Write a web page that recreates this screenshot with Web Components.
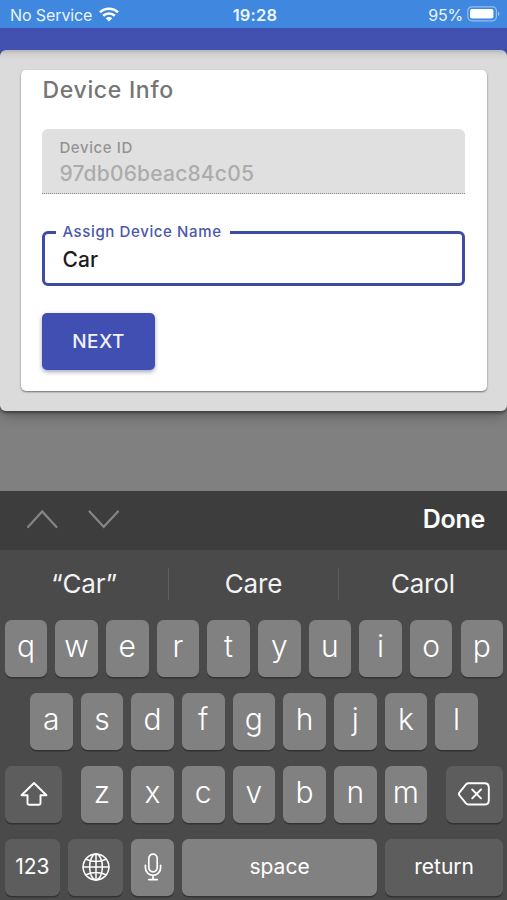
<!DOCTYPE html>
<html lang="en">
<head>
<meta charset="utf-8">
<title>Device Info</title>
<style>
    html, body {
        margin: 0;
        padding: 0;
    }

    body {
        width: 507px;
        height: 900px;
        overflow: hidden;
        background: #808080;
        font-family: Inter, "Liberation Sans", sans-serif;
    }
</style>
</head>
<body>
<device-screen></device-screen>

<script>
class BaseElement extends HTMLElement {

    constructor() {
        super();
        this.attachShadow({ mode: "open" });
    }

    connectedCallback() {
        this.shadowRoot.innerHTML = this.render();
    }
}

class StatusBar extends BaseElement {

    render() {
        return `
            <style>
                :host {
                    display: grid;
                    grid-template-columns: 1fr auto 1fr;
                    align-items: center;
                    box-sizing: border-box;
                    height: 28px;
                    padding: 1px 7px 0 10px;
                    background: #3f87df;
                    color: #eaf5ff;
                    font-size: 16px;
                    line-height: 20px;
                }

                div {
                    display: flex;
                    align-items: center;
                }

                .carrier {
                    letter-spacing: -0.1px;
                }

                .wifi {
                    margin: -1px 0 0 7px;
                }

                .time {
                    font-weight: 600;
                    font-size: 16.5px;
                    letter-spacing: 0.2px;
                }

                .power {
                    justify-content: flex-end;
                    letter-spacing: -0.2px;
                }

                .battery {
                    margin: -1px 0 0 4px;
                }
            </style>
            <div>
                <span class="carrier">No Service</span>
                <svg class="wifi" width="20" height="15" viewBox="0 0 20 15" fill="none" stroke="#fff" stroke-width="2.6">
                    <path d="M1 5.3a13 13 0 0 1 18 0"/>
                    <path d="M4.2 8.8a8.3 8.3 0 0 1 11.6 0"/>
                    <path d="M10 14.6 6.7 11.3a4.8 4.8 0 0 1 6.6 0z" fill="#fff" stroke="none"/>
                </svg>
            </div>
            <span class="time">19:28</span>
            <div class="power">
                <span>95%</span>
                <svg class="battery" width="33" height="16" viewBox="0 0 33 16">
                    <rect x="0.8" y="0.8" width="28.6" height="14" rx="4" fill="none" stroke="#93c0f0" stroke-width="1.2"/>
                    <rect x="3" y="3" width="23.4" height="9.6" rx="1.8" fill="#fff"/>
                    <path d="M31 5.5q1.4.6 1.4 2.3T31 10.2z" fill="#93c0f0"/>
                </svg>
            </div>
        `;
    }
}

class TextField extends BaseElement {

    render() {
        return `
            <style>
                :host {
                    display: block;
                    box-sizing: border-box;
                    width: 423px;
                    height: 65px;
                    padding: 10px 17px 0;
                    border-bottom: 1px dotted #8c8c8c;
                    border-radius: 6px 6px 0 0;
                    background: #e0e0e0;
                }

                .label {
                    color: #939393;
                    font-size: 15px;
                    font-weight: 500;
                    line-height: 18px;
                    letter-spacing: 0.6px;
                }

                .value {
                    margin-top: 4px;
                    color: #acacac;
                    font-size: 21px;
                    font-weight: 450;
                    line-height: 26px;
                    letter-spacing: 0.2px;
                }
            </style>
            <div class="label">${this.getAttribute("label")}</div>
            <div class="value"><slot></slot></div>
        `;
    }
}

class OutlinedField extends BaseElement {

    render() {
        return `
            <style>
                :host {
                    display: block;
                }

                fieldset {
                    box-sizing: border-box;
                    width: 423px;
                    height: 63px;
                    margin: 0;
                    padding: 0 17px;
                    border: 3px solid #3d4ba5;
                    border-radius: 6px;
                }

                legend {
                    margin-left: -6px;
                    padding: 0 8px 0 6px;
                    color: #4a57ab;
                    font-size: 15px;
                    font-weight: 500;
                    line-height: 18px;
                    letter-spacing: 0.62px;
                    white-space: nowrap;
                }

                .value {
                    margin-top: 6px;
                    color: #1c1c1c;
                    font-size: 21px;
                    font-weight: 500;
                    line-height: 26px;
                    letter-spacing: 0.2px;
                }
            </style>
            <fieldset>
                <legend>${this.getAttribute("label")}</legend>
                <div class="value"><slot></slot></div>
            </fieldset>
        `;
    }
}

class RaisedButton extends BaseElement {

    render() {
        return `
            <style>
                :host {
                    display: block;
                }

                button {
                    display: block;
                    width: 112.5px;
                    height: 57px;
                    padding: 0;
                    border: 0;
                    border-radius: 5px;
                    background: #404fb1;
                    box-shadow: 0 2px 4px rgba(30, 35, 90, 0.4);
                    color: #f0f3ff;
                    font: 500 19px/57px Inter, sans-serif;
                    letter-spacing: 0.5px;
                }
            </style>
            <button><slot></slot></button>
        `;
    }
}

class DeviceCard extends BaseElement {

    render() {
        return `
            <style>
                :host {
                    display: block;
                    box-sizing: border-box;
                    height: 321px;
                    padding: 6px 21px 0 21.4px;
                    border-radius: 5px;
                    background: #fff;
                    box-shadow: 0 1px 2px rgba(0, 0, 0, 0.5);
                }

                h2 {
                    margin: 0 0 25px;
                    color: #757575;
                    font-size: 23px;
                    font-weight: 500;
                    line-height: 28px;
                    letter-spacing: 0.7px;
                }

                outlined-field {
                    margin: 29px 0 27px;
                }
            </style>
            <h2>Device Info</h2>
            <text-field label="Device ID">97db06beac84c05</text-field>
            <outlined-field label="Assign Device Name">Car</outlined-field>
            <raised-button>NEXT</raised-button>
        `;
    }
}

class InputToolbar extends BaseElement {

    render() {
        return `
            <style>
                :host {
                    display: flex;
                    align-items: center;
                    justify-content: space-between;
                    box-sizing: border-box;
                    height: 59px;
                    padding: 0 22px 4px 26px;
                    background: #3d3d3d;
                    color: #fff;
                    font-size: 25px;
                    font-weight: 600;
                    letter-spacing: -0.3px;
                }

                svg {
                    fill: none;
                    stroke: #858585;
                    stroke-width: 2.2;
                    stroke-linecap: round;
                }
            </style>
            <svg width="94" height="22" viewBox="0 0 94 22">
                <path d="M2 19 16.2 3.5 30.5 19M63.5 3.5 77.7 18.8 92 3.5"/>
            </svg>
            <span>Done</span>
        `;
    }
}

class SuggestionBar extends BaseElement {

    render() {
        const words = this.getAttribute("words").split(",");
        return `
            <style>
                :host {
                    display: flex;
                    align-items: center;
                    box-sizing: border-box;
                    height: 70px;
                    padding-bottom: 2px;
                }

                span {
                    flex: 1;
                    color: #f2f2f2;
                    font-size: 26px;
                    line-height: 32px;
                    letter-spacing: -0.2px;
                    text-align: center;
                }

                span + span {
                    border-left: 1px solid #5e5e5e;
                }
            </style>
            ${words.map(word => `<span>${word}</span>`).join("")}
        `;
    }
}

class KeyCap extends BaseElement {

    render() {
        return `
            <style>
                :host {
                    display: flex;
                    align-items: center;
                    justify-content: center;
                    box-sizing: border-box;
                    flex: none;
                    width: 42.6px;
                    height: 56.5px;
                    padding-bottom: 4.5px;
                    border-radius: 6.5px;
                    background: #818181;
                    box-shadow: 0 1.5px 0 #333;
                    color: #fff;
                    font-size: 30px;
                    font-weight: 350;
                }

                :host([dark]) {
                    background: #5d5d5d;
                }

                :host([small]) {
                    padding-bottom: 2px;
                    font-size: 21px;
                    font-weight: 400;
                }

                :host([icon]) {
                    padding-bottom: 0;
                }
            </style>
            <slot></slot>
        `;
    }
}

class SoftKeyboard extends BaseElement {

    keys(letters) {
        return [...letters].map(letter => `<key-cap>${letter}</key-cap>`).join("");
    }

    render() {
        return `
            <style>
                :host {
                    display: block;
                    height: 350px;
                    background: #4a4a4a;
                }

                .row {
                    display: flex;
                    justify-content: center;
                    gap: 8.07px;
                    height: 56.5px;
                    margin-bottom: 16.5px;
                    padding-left: 0.8px;
                }

                .wide {
                    width: 56.7px;
                }

                .shift {
                    margin-right: 10.7px;
                }

                .delete {
                    margin-left: 10.7px;
                }

                .mode {
                    width: 55.3px;
                }

                .space {
                    width: 195px;
                }

                .return {
                    width: 118px;
                }

                svg {
                    fill: none;
                    stroke: #fff;
                    stroke-width: 1.9;
                    stroke-linejoin: round;
                    stroke-linecap: round;
                }
            </style>
            <suggestion-bar words="“Car”,Care,Carol"></suggestion-bar>
            <div class="row">${this.keys("qwertyuiop")}</div>
            <div class="row">${this.keys("asdfghjkl")}</div>
            <div class="row">
                <key-cap class="wide shift" dark icon>
                    <svg width="28" height="26" viewBox="0 0 28 26">
                        <path d="M14 2 1.5 14.2h6V22q0 1.8 1.8 1.8h9.4q1.8 0 1.8-1.8v-7.8h6z"/>
                    </svg>
                </key-cap>
                ${this.keys("zxcvbnm")}
                <key-cap class="wide delete" dark icon>
                    <svg width="32" height="24" viewBox="0 0 32 24">
                        <path d="M10.5 1.3h16Q30.8 1.3 30.8 5.6v12.6q0 4.3-4.3 4.3h-16q-1.5 0-2.5-1.1L1.6 13.5q-1.4-1.6 0-3.2L8 2.4q1-1.1 2.5-1.1z"/>
                        <path d="m14.2 7.5 8.8 8.8M23 7.5l-8.8 8.8"/>
                    </svg>
                </key-cap>
            </div>
            <div class="row">
                <key-cap class="mode" dark small>123</key-cap>
                <key-cap class="mode" dark icon>
                    <svg width="28" height="28" viewBox="0 0 28 28" style="stroke-width: 1.5">
                        <circle cx="14" cy="14" r="12.9"/>
                        <ellipse cx="14" cy="14" rx="6.4" ry="12.9"/>
                        <path d="M14 1.1v25.8M1.1 14h25.8M4 6.2q10 4.8 20 0M4 21.8q10-4.8 20 0"/>
                    </svg>
                </key-cap>
                <key-cap icon>
                    <svg width="18" height="28" viewBox="0 0 18 28" style="stroke-width: 1.7">
                        <rect x="4.8" y="1.2" width="8.4" height="17.6" rx="4.2"/>
                        <path d="M1.4 12.3v2.5a7.6 7.6 0 0 0 15.2 0v-2.5M9 22.4v4.2M4.8 26.6h8.4"/>
                    </svg>
                </key-cap>
                <key-cap class="space" small>space</key-cap>
                <key-cap class="return" dark small>return</key-cap>
            </div>
        `;
    }
}

class DeviceScreen extends BaseElement {

    render() {
        return `
            <style>
                :host {
                    display: flex;
                    flex-direction: column;
                    height: 900px;
                }

                .app-bar {
                    height: 22px;
                    background: #4250b0;
                }

                .page {
                    height: 441px;
                    background: linear-gradient(#4250b0 8px, #808080 8px);
                }

                .panel {
                    box-sizing: border-box;
                    height: 361px;
                    padding: 20px 20px 0 21px;
                    border-radius: 6px;
                    background: linear-gradient(#b5b5b5, #d0d0d0 4px, #dbdbdb 11px);
                    box-shadow: 0 2px 3px rgba(0, 0, 0, 0.4), 0 4px 14px rgba(0, 0, 0, 0.3);
                    clip-path: inset(0 0 -30px 0);
                }
            </style>
            <status-bar></status-bar>
            <div class="app-bar"></div>
            <div class="page">
                <div class="panel">
                    <device-card></device-card>
                </div>
            </div>
            <input-toolbar></input-toolbar>
            <soft-keyboard></soft-keyboard>
        `;
    }
}

customElements.define("status-bar", StatusBar);
customElements.define("text-field", TextField);
customElements.define("outlined-field", OutlinedField);
customElements.define("raised-button", RaisedButton);
customElements.define("device-card", DeviceCard);
customElements.define("input-toolbar", InputToolbar);
customElements.define("suggestion-bar", SuggestionBar);
customElements.define("key-cap", KeyCap);
customElements.define("soft-keyboard", SoftKeyboard);
customElements.define("device-screen", DeviceScreen);
</script>
</body>
</html>
